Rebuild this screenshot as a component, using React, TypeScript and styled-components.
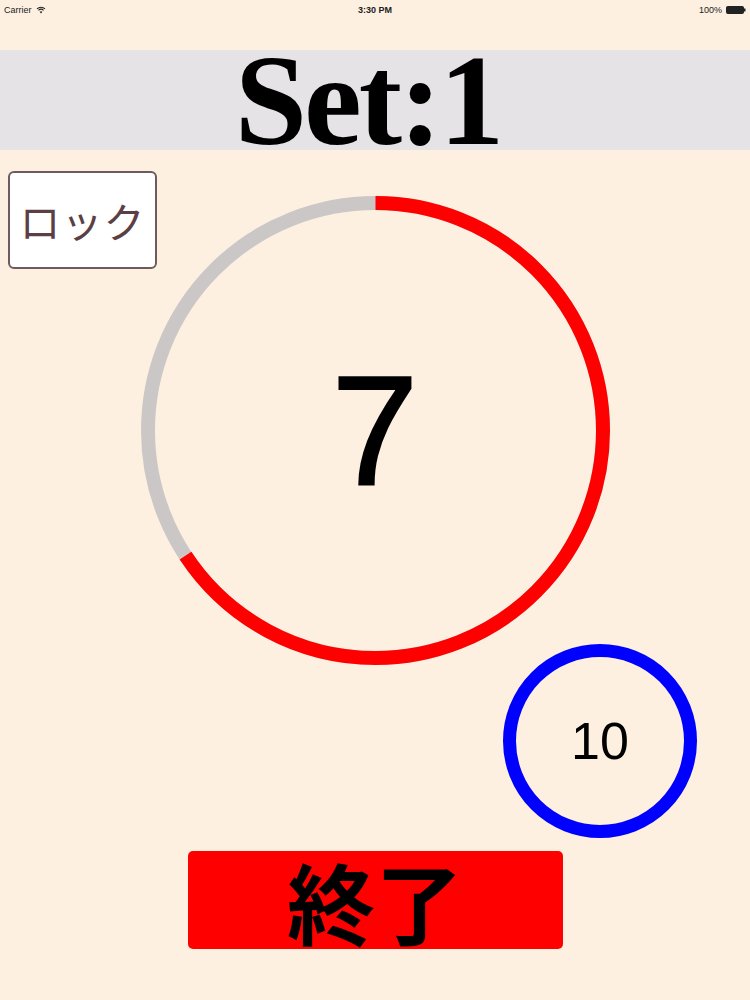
import React from "react";
import styled, { createGlobalStyle } from "styled-components";

const GlobalStyle = createGlobalStyle`
  html, body {
    margin: 0;
    padding: 0;
    background: #fdf0e1;
  }
`;

const Page = styled.div`
  width: 750px;
  height: 1000px;
  background: #fdf0e1;
  display: flex;
  flex-direction: column;
  overflow: hidden;
`;

const StatusBar = styled.div`
  height: 20px;
  display: grid;
  grid-template-columns: 1fr auto 1fr;
  align-items: center;
  padding: 0 4px;
  font-family: "Liberation Sans", Arial, sans-serif;
  font-size: 9px;
  color: #222;
`;

const StatusSide = styled.div<{ $end?: boolean }>`
  display: flex;
  align-items: center;
  gap: 4px;
  justify-content: ${(p) => (p.$end ? "flex-end" : "flex-start")};
`;

const Clock = styled.div`
  font-weight: bold;
`;

const Header = styled.div`
  margin-top: 30px;
  height: 100px;
  background: #e5e3e5;
  display: flex;
  justify-content: center;
  align-items: center;
`;

const SetTitle = styled.h1`
  margin: 0 14px 0 0;
  font-family: "Liberation Serif", "Times New Roman", serif;
  font-weight: bold;
  font-size: 130px;
  line-height: 100px;
  letter-spacing: -3px;
  color: #000;
`;

const Stage = styled.div`
  display: grid;
  grid-template-columns: 1fr;
`;

const LockButton = styled.button`
  grid-area: 1 / 1;
  justify-self: start;
  align-self: start;
  margin: 21px 0 0 8px;
  width: 149px;
  height: 98px;
  box-sizing: border-box;
  background: #fff;
  border: 2px solid #6e5b5d;
  border-radius: 6px;
  padding: 0;
  font-family: "Noto Sans CJK JP", sans-serif;
  font-size: 41px;
  color: #5b3f45;
  letter-spacing: 1px;
`;

const RingWrap = styled.div<{ $size: number }>`
  grid-area: 1 / 1;
  justify-self: center;
  margin-top: 46px;
  width: ${(p) => p.$size}px;
  height: ${(p) => p.$size}px;
  display: grid;
  place-items: center;
  & > * {
    grid-area: 1 / 1;
  }
`;

const Count = styled.div`
  font-family: "Liberation Sans", Arial, sans-serif;
  font-size: 156px;
  line-height: 1;
  color: #000;
  -webkit-text-stroke: 2px #000;
`;

const SubRow = styled.div`
  display: flex;
  justify-content: flex-end;
  margin-top: -21px;
  padding-right: 53px;
`;

const SubRing = styled.div`
  width: 194px;
  height: 194px;
  box-sizing: border-box;
  border: 13px solid #0000ff;
  border-radius: 50%;
  display: flex;
  align-items: center;
  justify-content: center;
  font-family: "Liberation Sans", Arial, sans-serif;
  font-size: 52px;
  color: #000;
`;

const EndButton = styled.button`
  align-self: center;
  margin-top: 13px;
  width: 375px;
  height: 98px;
  background: #ff0000;
  border: none;
  border-radius: 5px;
  padding: 0;
  font-family: "Noto Sans CJK JP", sans-serif;
  font-weight: bold;
  font-size: 88px;
  line-height: 1;
  color: #000;
`;

function Wifi() {
  return (
    <svg width="10" height="8" viewBox="0 0 12 10">
      <path d="M1 3.6 A7 7 0 0 1 11 3.6" fill="none" stroke="#222" strokeWidth="1.3" />
      <path d="M2.8 5.4 A4.6 4.6 0 0 1 9.2 5.4" fill="none" stroke="#222" strokeWidth="1.3" />
      <path d="M6 9.4 L4.3 7.3 A2.4 2.4 0 0 1 7.7 7.3 Z" fill="#222" />
    </svg>
  );
}

function Battery() {
  return (
    <svg width="20" height="8" viewBox="0 0 20 8">
      <rect x="0.5" y="0.5" width="17" height="7" rx="1" fill="#222" stroke="#222" />
      <rect x="18" y="2.5" width="1.5" height="3" fill="#222" />
    </svg>
  );
}

function ProgressRing({ size, stroke, fraction }: { size: number; stroke: number; fraction: number }) {
  const r = (size - stroke) / 2;
  const c = 2 * Math.PI * r;
  return (
    <svg width={size} height={size} viewBox={`0 0 ${size} ${size}`}>
      <circle cx={size / 2} cy={size / 2} r={r} fill="none" stroke="#cbc7c7" strokeWidth={stroke} />
      <circle
        cx={size / 2}
        cy={size / 2}
        r={r}
        fill="none"
        stroke="#ff0000"
        strokeWidth={stroke}
        strokeDasharray={`${c * fraction} ${c}`}
        transform={`rotate(-90 ${size / 2} ${size / 2})`}
      />
    </svg>
  );
}

export default function App() {
  return (
    <>
      <GlobalStyle />
      <Page>
        <StatusBar>
          <StatusSide>
            <span>Carrier</span>
            <Wifi />
          </StatusSide>
          <Clock>3:30 PM</Clock>
          <StatusSide $end>
            <span>100%</span>
            <Battery />
          </StatusSide>
        </StatusBar>

        <Header>
          <SetTitle>Set:1</SetTitle>
        </Header>

        <Stage>
          <LockButton>ロック</LockButton>
          <RingWrap $size={469}>
            <ProgressRing size={469} stroke={14} fraction={0.657} />
            <Count>7</Count>
          </RingWrap>
        </Stage>

        <SubRow>
          <SubRing>10</SubRing>
        </SubRow>

        <EndButton>終了</EndButton>
      </Page>
    </>
  );
}
